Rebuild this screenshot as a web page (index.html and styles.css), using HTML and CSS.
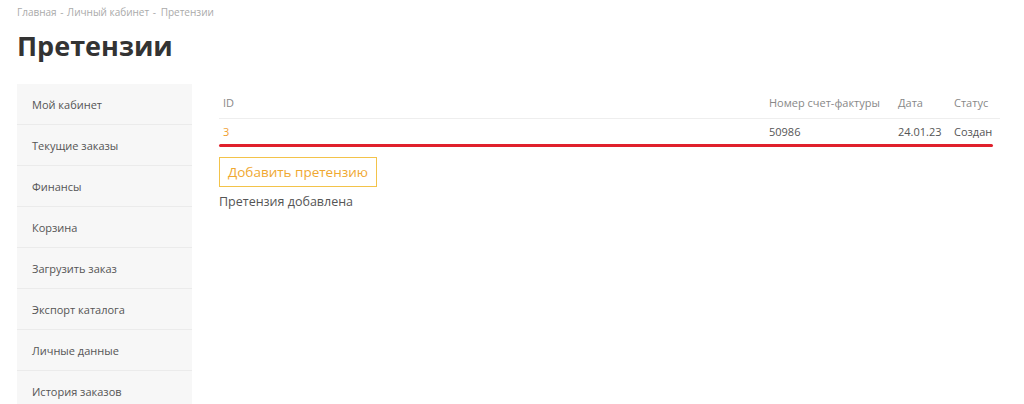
FILE: index.html
```html
<!DOCTYPE html>
<html>
<head>
<meta charset="utf-8">
<title>Претензии</title>
<link rel="stylesheet" href="styles.css">
</head>
<body>
	<div id="page">
		<div class="crumbs">
			<a href="#">Главная</a> <span>-</span> <a href="#">Личный кабинет</a> <span>-</span> <span>Претензии</span>
		</div>
		<h1>Претензии</h1>
		<div class="main">
			<ul class="side">
				<li><a href="#">Мой кабинет</a></li>
				<li><a href="#">Текущие заказы</a></li>
				<li><a href="#">Финансы</a></li>
				<li><a href="#">Корзина</a></li>
				<li><a href="#">Загрузить заказ</a></li>
				<li><a href="#">Экспорт каталога</a></li>
				<li><a href="#">Личные данные</a></li>
				<li><a href="#">История заказов</a></li>
			</ul>
			<div class="content">
				<table class="claims">
					<tr>
						<th class="c-id">ID</th>
						<th class="c-num">Номер счет-фактуры</th>
						<th class="c-date">Дата</th>
						<th class="c-st">Статус</th>
					</tr>
					<tr>
						<td><a href="#">3</a></td>
						<td>50986</td>
						<td>24.01.23</td>
						<td>Создан</td>
					</tr>
				</table>
				<div class="mark"></div>
				<button class="add">Добавить претензию</button>
				<p class="note">Претензия добавлена</p>
			</div>
		</div>
	</div>
</body>
</html>
```

FILE: styles.css
```css
html, body {
	margin: 0;
	height: 100%;
	overflow: hidden;
	background: #fff;
	font-family: "Open Sans", "Noto Sans", sans-serif;
	color: #555;
}

#page {
	padding: 0 17px;
}

.crumbs {
	padding-top: 4px;
	font-size: 10px;
	line-height: 16px;
	color: #aaa;
}

.crumbs a {
	color: #aaa;
	text-decoration: none;
}

.crumbs span {
	margin: 0 1px;
}

h1 {
	margin: 8px 0 0;
	font-size: 27px;
	line-height: 36px;
	font-weight: bold;
	color: #333;
}

.main {
	display: flex;
	margin-top: 20px;
}

.side {
	list-style: none;
	margin: 0;
	padding: 0;
	width: 175px;
	flex: none;
	background: #f7f7f7;
}

.side li {
	height: 40px;
	border-bottom: 1px solid #ebebeb;
	display: flex;
	align-items: center;
	padding-left: 15px;
}

.side a {
	font-size: 11px;
	color: #555;
	text-decoration: none;
}

.content {
	flex: 1;
	margin-left: 27px;
	margin-right: 7px;
}

.claims {
	width: 100%;
	border-collapse: collapse;
	font-size: 11px;
	line-height: 18px;
}

.claims th {
	text-align: left;
	font-weight: normal;
	color: #888;
	padding: 10px 4px 6px;
	border-bottom: 1px solid #eee;
}

.claims td {
	padding: 4px 4px 3px;
	color: #555;
}

.claims td a {
	color: #f0a030;
	text-decoration: none;
}

.c-num {
	width: 121px;
}

.c-date {
	width: 48px;
}

.c-st {
	width: 42px;
}

.mark {
	height: 3px;
	background: #e0202c;
	border-radius: 2px;
	margin-right: 7px;
}

.add {
	display: block;
	margin-top: 10px;
	height: 30px;
	padding: 0 8px;
	background: #fff;
	border: 1px solid #f3c34a;
	color: #f0a830;
	font-family: "Open Sans", "Noto Sans", sans-serif;
	font-size: 13.5px;
}

.note {
	margin: 6px 0 0;
	font-size: 12.5px;
	line-height: 18px;
	color: #555;
}
```
